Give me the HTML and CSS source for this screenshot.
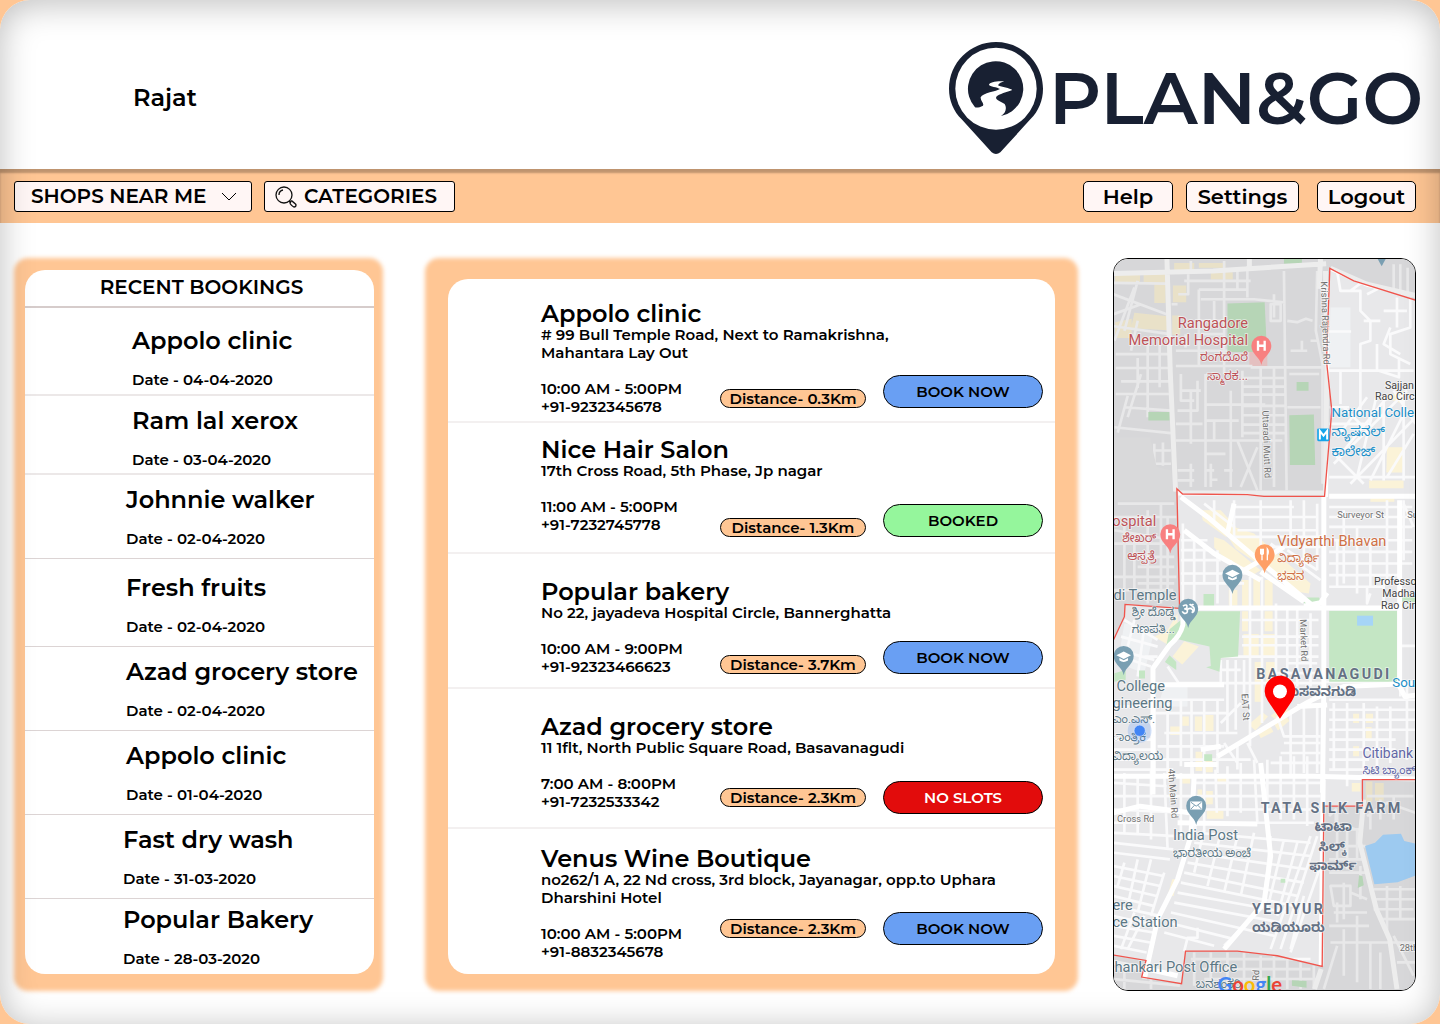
FILE: index.html
```html
<!DOCTYPE html>
<html lang="en">
<head>
<meta charset="utf-8">
<meta name="viewport" content="width=device-width, initial-scale=1">
<title>Plan&amp;Go</title>
<link rel="stylesheet" href="styles.css">
</head>
<body>
<div class="shell">
  <header class="header">
    <p class="user">Rajat</p>
    <a class="brand" href="#">
      <svg class="brand-mark" viewBox="57 66 282 336" aria-hidden="true">
        <path fill="#182032" fill-rule="evenodd" d="M198 66C120 66 57 129 57 206c0 36 14 68 38 92l90 99q13 10 26 0l90-99c24-24 38-56 38-92C339 129 276 66 198 66zM198 83a122 123 0 1 1 0 246a122 123 0 1 1 0-246z"/>
        <path fill="#182032" d="M135 262A83 83 0 1 1 213 288C228 280 231 262 224 252C214 244 194 240 199 230C206 222 232 216 247 210C240 204 215 202 204 196C206 190 215 186 223 184C200 182 178 187 177 194C179 200 202 201 210 207C200 214 158 218 152 232C151 244 163 249 159 257C150 262 140 264 135 262z"/>
      </svg>
      <span class="brand-name">PLAN&amp;GO</span>
    </a>
  </header>

  <nav class="bar">
    <div class="drop">
      <select class="box drop-select" aria-label="Shops near me"><option>SHOPS NEAR ME</option></select>
      <svg class="drop-arrow" viewBox="0 0 16 9" aria-hidden="true"><path d="M1 1l7 7 7-7"/></svg>
    </div>
    <button class="box categories" type="button">
      <svg class="lens" viewBox="0 0 22 22" aria-hidden="true">
        <circle cx="9" cy="9" r="8"/><path d="M4 9a5 5 0 0 1 4-5M14 15l2 2M16 15l-1 2c0 1 3 4 4 4s2-1 2-2-3-3-4-4z"/>
      </svg>
      CATEGORIES
    </button>
    <div class="account">
      <button class="box account-btn help" type="button">Help</button>
      <button class="box account-btn settings" type="button">Settings</button>
      <button class="box account-btn logout" type="button">Logout</button>
    </div>
  </nav>

  <main class="main">
    <section class="panel recent">
      <div class="sheet">
        <h2 class="recent-title">RECENT BOOKINGS</h2>
        <ul class="list">
          <li class="booking booking--top booking--inset"><h3 class="name">Appolo clinic</h3><p class="small">Date - 04-04-2020</p></li>
          <li class="booking booking--short booking--inset"><h3 class="name">Ram lal xerox</h3><p class="small">Date - 03-04-2020</p></li>
          <li class="booking"><h3 class="name">Johnnie walker</h3><p class="small">Date - 02-04-2020</p></li>
          <li class="booking booking--mid"><h3 class="name">Fresh fruits</h3><p class="small">Date - 02-04-2020</p></li>
          <li class="booking"><h3 class="name">Azad grocery store</h3><p class="small">Date - 02-04-2020</p></li>
          <li class="booking"><h3 class="name">Appolo clinic</h3><p class="small">Date - 01-04-2020</p></li>
          <li class="booking booking--outset"><h3 class="name">Fast dry wash</h3><p class="small">Date - 31-03-2020</p></li>
          <li class="booking booking--outset booking--last"><h3 class="name">Popular Bakery</h3><p class="small">Date - 28-03-2020</p></li>
        </ul>
      </div>
    </section>

    <section class="panel shops">
      <div class="sheet">
        <ul class="list shop-list">
          <li class="shop">
            <div class="info"><h3 class="name">Appolo clinic</h3><p class="small"># 99 Bull Temple Road, Next to Ramakrishna,<br>Mahantara Lay Out</p><p class="small hours">10:00 AM - 5:00PM<br>+91-9232345678</p></div>
            <div class="actions"><span class="distance">Distance- 0.3Km</span><button class="book" type="button">BOOK NOW</button></div>
          </li>
          <li class="shop shop--tight">
            <div class="info"><h3 class="name">Nice Hair Salon</h3><p class="small">17th Cross Road, 5th Phase, Jp nagar</p><p class="small hours">11:00 AM - 5:00PM<br>+91-7232745778</p></div>
            <div class="actions"><span class="distance">Distance- 1.3Km</span><button class="book book--done" type="button">BOOKED</button></div>
          </li>
          <li class="shop shop--roomy">
            <div class="info"><h3 class="name">Popular bakery</h3><p class="small">No 22, jayadeva Hospital Circle, Bannerghatta</p><p class="small hours">10:00 AM - 9:00PM<br>+91-92323466623</p></div>
            <div class="actions"><span class="distance">Distance- 3.7Km</span><button class="book" type="button">BOOK NOW</button></div>
          </li>
          <li class="shop shop--roomy">
            <div class="info"><h3 class="name">Azad grocery store</h3><p class="small">11 1flt, North Public Square Road, Basavanagudi</p><p class="small hours">7:00 AM - 8:00PM<br>+91-7232533342</p></div>
            <div class="actions actions--middle"><span class="distance">Distance- 2.3Km</span><button class="book book--full" type="button" disabled>NO SLOTS</button></div>
          </li>
          <li class="shop shop--last">
            <div class="info"><h3 class="name">Venus Wine Boutique</h3><p class="small">no262/1 A, 22 Nd cross, 3rd block, Jayanagar, opp.to Uphara<br>Dharshini Hotel</p><p class="small hours">10:00 AM - 5:00PM<br>+91-8832345678</p></div>
            <div class="actions actions--middle"><span class="distance">Distance- 2.3Km</span><button class="book" type="button">BOOK NOW</button></div>
          </li>
        </ul>
      </div>
    </section>

    <section class="map" aria-label="Map of Basavanagudi">
      <svg class="map-art" viewBox="27 24 909 2199" preserveAspectRatio="xMidYMid slice">
        <defs>
          <path id="pin" d="M0 58C-5 32-30 26-30 0a30 30 0 0 1 60 0C30 26 5 32 0 58z"/>
          <g id="cap" fill="#fff"><path d="M-22-4L0-15 22-4 0 7z"/><path d="M-13 4v8q13 9 26 0V4L0 11z"/></g>
        </defs>
        <rect x="27" y="24" width="909" height="2199" fill="#e8e8ea"/>

        <!-- commercial blocks -->
        <g fill="#fbf3d8">
          <path d="M32 66h75v32H32zM118 66h65v28h-65zM210 36h60v26h-60zM284 36h80v14h-80zM150 94h34v62h-34zM206 104h40v50h-40zM90 186l100 10v42l-110-6zM32 214l50-10v58H32zM204 194h24v58h-24zM320 64h66v22h-66z"/>
          <path d="M850 590h54l-8 76h-48zM796 690h104v24H796zM800 742h72v12h-72zM840 440l60-20v40z"/>
          <path d="M290 780l60 0 46 50-30 30-70-50zM390 830l60 20 170 150-5 30-30-4-190-130-26-40zM330 860l30 10 110 90-20 12-60-20-60-60z"/>
          <path d="M414 990h20v90h-20zM448 980h20v100h-20zM482 990h24v90h-24zM414 1084h18v60h-18zM482 1084h24v60h-24zM418 1152h46v66h-46zM476 1152h38v66h-38zM374 1020h26v46h-26z"/>
          <path d="M205 1220l35-46 44 16-50 54zM150 1160l40-20 30-50v50l-20 50zM434 1424l42-36 16 12-38 42zM462 1448l36-22 10 20-38 20zM500 1398l40-30 20 20-40 24zM508 1420l40-20 8 14-34 28zM452 1236h24v120h-24zM486 1236h28v90h-28z"/>
          <path d="M272 1400h22v44h-22zM302 1396h26v48h-26zM234 1400h20v28h-20zM198 1430h30v26h-30zM748 1392h18v28h-18zM786 1392h22v28h-22zM786 1432h18v40h-18zM748 1490h18v30h-18zM274 1506h20v58h-20zM304 1530h22v38h-22zM280 1620h14v60h-14zM306 1624h20v40h-20zM340 1584h32v18h-32zM308 1684h50v24h-50zM234 1584h24v18h-24zM744 1600h26v26h-26zM786 1596h20v60h-20zM814 1600h26v54h-26zM204 1890h14l-10 50h-18z"/>
        </g>
        <path fill="#eff1f3" d="M680 170h60v180h-66zM60 1120l90 20-30 130-80-30zM180 1310h70v60h-90z"/>
        <path fill="#f6cfcf" d="M436 300h54v46h-54z"/>

        <!-- streets -->
        <g fill="none" stroke-linejoin="round">
          <path class="lane" d="M27 96L186 98M240 90l200 0M27 130l160 60M110 160L27 190M60 240l40-150M30 270l60-160M27 226l170 24M80 300l20-90M34 310h160M34 352h170M50 392h150M34 430h160M60 470l140 10M30 530l170 18M40 546l30-110M70 500l40-130M130 280v220M166 270v140M100 322v90M150 580v60M176 576v70M150 600h50M145 640h55"/>
          <path class="lane" d="M220 160h-18M260 30v30M252 70v60h-30M284 116h146l0-70M360 30v120M430 60v80M400 48v66M284 116v230M360 150v220M330 150v60M244 250v40M290 145h160l94 10M215 300h220M215 346h230M510 130v70M540 60l8 660M500 160v50h30v-50zM550 210l30 4 26-10 20 6M560 300h50M594 300v-30M440 350h220M290 210h70M290 250h70"/>
          <path class="lane" d="M230 370v80h40M215 520h80M230 420l60 0M220 480h60v-90M260 420v160M304 370v340M380 420v290M304 462h180M304 510h100M330 510v60M215 570h320M304 610h60M320 640v70M330 660h-26M320 688h20M220 660h50M220 690h50M260 640v70M400 570l60 150M460 590l-50 120M360 660h26M415 360v200M470 350v370M510 350v360M415 382h130M415 408h130M415 432h130M415 466h130M415 494h130M415 522h130M415 548h130M550 470h100M556 370h90M640 60l-4 180 20 100v360M620 270h20"/>
          <path class="lane" d="M700 60l10 60h60v60l30 30v60l-30 10v80h160M790 130l40-20 90 30v90l-60 20v60l60 30M840 180h70M780 210h50M860 230l-20 50 50 30M676 242h66M676 360h250M710 360v100M770 360v130M870 40v80M890 40v80M912 50v80M740 120l40-30M826 360l60 20 0-60M880 140v90M820 280v80"/>
          <path class="lane" d="M690 640l220-220M676 680h260M740 700l196-200M700 560l90-120M720 600l130-160M800 690l100-200M676 520h120M690 610l90 90M900 440v250M840 450v240M870 420l66 100M720 470l60 60M676 470l60 0M760 680l60-250M850 680l80-130"/>
          <path class="lane" d="M40 760h170M27 800h190M60 830v220M90 850v200M130 780v280M170 760v300M30 880h180M100 920h110M100 950h110M27 980h190M100 1000h110M190 800v250M27 1020h180M30 840l180 30"/>
          <path class="lane" d="M236 820v230M270 860v200M230 870h80M230 900h90M230 930h120M230 970h200M230 1000h190M300 880v120M340 900v160M380 930v150M330 750v60M390 750v110M470 750v180M390 770h180M390 800h250M400 840h240M390 860h260M470 890h180M560 750v130M600 750v200M640 760v200M300 760l90 70M500 880l150 110M550 900l90 60"/>
          <path class="lane" d="M676 770h250M676 800h250M676 830h250M676 870h250M676 905h250M676 940h250M676 975h210M676 1010h160M720 780v220M760 830v200M800 870v140M850 750v250M900 750v180M700 870v140M790 1010v50l10-30M840 990v80M890 960v120"/>
          <path class="lane" d="M438 980v510M474 980v440M414 1110h230M414 1160h230M414 1186h230M414 1220h230M516 1060v260M550 1070v220M580 1080v230M620 1090v220M550 1240h90M350 1220h230M350 1230v80M370 1230v220M395 1230v210M420 1230v110M350 1260h60M350 1420l60-60M516 1270h130M280 1300h140M190 1250l40 60M220 1300h440M60 1110l100 60M50 1160l110 30M40 1200l110 30M90 1110l-30 120M120 1130l-20 150M120 1220h40M80 1230l60 20M890 1188h46M890 1090v250"/>
          <path class="lane" d="M130 1350h230M150 1390h220M27 1370h110M150 1350v230M190 1360v220M230 1350v200M262 1350v230M300 1350v230M340 1350v220M180 1450h220M160 1490h200M160 1530h280M27 1530h140M27 1500h120M27 1470h120M520 1400l20 60h110M560 1390v190M540 1480h110M530 1510h120M500 1540h150M600 1370v200M640 1370v200M430 1480l30 60M400 1490v70M360 1480l40 60"/>
          <path class="lane" d="M676 1350h260M676 1380h260M676 1410h260M676 1440h260M676 1470h200M676 1500h200M676 1530h120M676 1560h120M730 1360v250M780 1360v220M820 1370v200M860 1370v170M910 1300v230M690 1360v200"/>
          <path class="lane" d="M27 1600l160 10M27 1640h240M27 1680l230 10M27 1720h80M27 1750l190 10M27 1780l180 20M27 1810l170 20M60 1570v180M100 1580v170M140 1560v210M180 1570l10 230M230 1570v190M264 1540l10 200M300 1560v190M334 1560l4 130M370 1550v150M410 1540v150M450 1530l10 190M490 1530v140M530 1520v190M570 1520v190M610 1520v210"/>
          <path class="lane" d="M270 1600h380M270 1640h380M280 1680h370M290 1720h340M280 1750l340 30M270 1780l350 40M260 1810l350 50M250 1840l350 60M240 1870l340 70M230 1900l340 70M220 1930l330 60M210 1960l320 60M200 1990l310 70M190 2020l200 50M180 2050l150 40M300 1740l-30 130M350 1750l-40 160M400 1760l-40 170M450 1750l-40 190M500 1760l-20 200M540 1770l-50 210M580 1780l-60 220M620 1760l-120 340M640 1760l-110 340M650 1850l-90 260M600 1940l-40 160M490 1960l-130 130"/>
          <path class="lane" d="M27 1850l150 30M27 1880l140 30M27 1910l130 30M27 1940l120 30M27 1970l140 30M27 2000l130 30M27 2030l120 20M27 2060l110 20M27 2090l100 20M60 1840l-20 70M100 1830l-30 140M140 1830l-40 160M120 2000l-50 100M90 1990l-40 110M180 1870l-40 130"/>
          <path class="lane" d="M676 1700l20-20v40l60 20M680 1740h90M676 1790h110M676 1830h110M700 1690v160M730 1720v140M760 1740v90M676 1870l110 0M680 1910l60 0v60h-50zM740 1930l50 20M690 1990h100M700 1960v60M720 1900v110M770 1850v100M676 2030h120M680 2080h256M720 2040v140M760 2000v200M790 1700l60-40 86 30M800 1680v60M830 1650v60M870 1640v70M790 1640h140M810 1920h126M810 1950h126M810 1980h120M830 2010h106M850 1910v140M890 1910v100M870 2060l60 120M900 2100h36M880 2140h56M800 2080v140M830 2110v110M700 2090l-40 130"/>
          <path class="lane" d="M260 2130h360M290 2160h330M300 2190h340M270 2110v100M320 2110v110M370 2110v110M420 2110v110M470 2120v100M510 2120v100M550 2130v90M590 2140v80M630 2150v70M27 2160h70M27 2190l200 20M60 2140v80M140 2190v30"/>
          <path class="lane" d="M660 1296h220M240 2106l10-40 30 0v-30M27 1560h180M900 760l30 70"/>
        </g>

        <!-- parks -->
        <g fill="#c4e6c4">
          <path d="M370 158l112-4 6 130-24 20h-94zM540 24h54v14h-54zM132 484h64v26h-64zM556 494l74-2 4 152h-76zM578 394h36v26h-36z"/>
          <path d="M298 1032h32v38h-32zM600 1042h46l6 22h-52zM676 1082h204v214H676zM262 1084h146l-6 136-52 4-4 42-40-14 14-4-4-58-70-16-40-10-22 34 12-60zM182 1236l14-20 20 20v24zM30 1270l34-10v30l-34 6z"/>
          <path d="M300 1514h24v20h-24zM766 1878l10 2 4 28-18 8zM564 2194l44 2v20l-44-6zM530 1888h14v12h-14zM890 1040h46v16h-46zM104 1262h18v24h-18z"/>
        </g>
        <!-- water -->
        <path fill="#a6d5f7" d="M760 1097h48v30h-48z"/>

        <g fill="none" stroke-linejoin="round">
          <path class="avenue" d="M188 24l10 340 16 360M27 68l300-8 340-22M650 24l-4 90M436 24v28M680 52l110 48 146 34M222 728h440M676 738h260M665 60l4 280-4 400M660 740v560l-4 330M230 740l80 60 320 270M240 840l90 70 140 80M470 965l130 90M390 760l-20 90M420 960l120-70M600 1068l50-10 20-30M230 1074h650M888 750v560l16 30 32-4M236 1075v50q-8 34-40 60l-50 70v380"/>
          <path class="avenue" d="M340 1520l100-60 150-90q40-26 130-60l216-10M140 1305h220M580 1370l90-4M27 1580h600l309 8M270 1580l-10 180-40 130-60 120-40 180M658 1590l-6 560M780 1650l-12 130 50 200 40 90 22 150M27 1690l80-20 150 20M220 1720l240 4M470 1540l30 280-20 140-120 140M130 2160l90 20M27 2140l100 20M652 2160l-20 60M290 1500l60-10M240 1545h100"/>
        </g>

        <!-- shade outside the ward -->
        <g fill="#000" fill-opacity=".07">
          <path d="M27 24H936V148L750 90 678 52 668 330 684 480 662 738 480 738 430 733 235 731 218 715 226 1075 62 1063 60 1100 27 1170z"/>
          <path d="M936 1590H776V1670H660L655 2152 520 2120 400 2106 244 2106 232 2204 112 2184 125 2134 27 2118V2223H936z"/>
        </g>
        <path fill="#d9d9da" d="M27 560h110l20 90 44 10 4 60 12 20v10H27z"/>
        <path fill="#9dcaf0" d="M784 1790l30-10 24-24 54-3 10 22 34 8v96l-54 20-70 6z"/>
        <g fill="none" stroke="#f0544c" stroke-width="4">
          <path d="M936 148L750 90 678 52 668 330 684 480 662 738 480 738 430 733 235 731 218 715 226 1075 62 1063 60 1100 27 1170"/>
          <path d="M936 1590H776V1670H660L655 2152 520 2120 400 2106 244 2106 232 2204 112 2184 125 2134 27 2118"/>
        </g>

        <!-- pins -->
        <use href="#pin" x="472" y="285" fill="#f88080"/>
        <use href="#pin" x="198" y="852" fill="#f88080"/>
        <use href="#pin" x="482" y="912" fill="#fe9f67"/>
        <use href="#pin" x="385" y="974" fill="#7a9fb2"/>
        <use href="#pin" x="252" y="1076" fill="#7a9fb2"/>
        <use href="#pin" x="58" y="1218" fill="#7a9fb2"/>
        <use href="#pin" x="276" y="1669" fill="#7a9fb2"/>
        <path d="M822 24h24l-12 22z" fill="#7a9fb2"/>
        <use href="#cap" x="385" y="974"/>
        <use href="#cap" x="58" y="1220"/>
        <path fill="none" stroke="#fff" stroke-width="7" d="M462 270v30M482 270v30M462 285h20M188 837v30M208 837v30M188 852h20"/>
        <path fill="none" stroke="#fff" stroke-width="4" d="M470 896v14q4 6 8 0v-14M474 896v34M490 930v-34q6 8 0 20"/>
        <path fill="none" stroke="#fff" stroke-width="5" d="M236 1068q14-8 12 4q0 4-8 4q14 2 8 12q-8 6-14-4M250 1078q8-6 14 0t0 10M262 1070q8-2 8 8t-8 8M256 1062q6 6 12 0"/>
        <path fill="#fff" d="M258 1656h36v24h-36z"/><path fill="none" stroke="#7a9fb2" stroke-width="3" d="M260 1658l16 12 16-12M260 1679l11-12M292 1679l-11-12"/>
        <rect x="640" y="534" width="37" height="38" rx="4" fill="#16a5ea"/>
        <path d="M648 567v-26l11 14 11-14v26" fill="none" stroke="#fff" stroke-width="6"/>

        <!-- labels -->
        <g class="label" font-size="44" text-anchor="end" fill="#bd5257"><text x="432" y="233">Rangadore</text><text x="432" y="283">Memorial Hospital</text><text x="156" y="826">ospital</text></g>
        <g class="label" font-size="36" text-anchor="end" fill="#bd5257"><text x="432" y="332">ರಂಗದೊರೆ</text><text x="432" y="388">ಸ್ಮಾರಕ...</text><text x="156" y="874">ಶೇಖರ್</text><text x="156" y="930">ಆಸ್ಪತ್ರೆ</text></g>
        <g class="label" font-size="32" fill="#444"><text x="844" y="414">Sajjan</text><text x="814" y="449">Rao Circ</text><text x="811" y="1005">Professo</text><text x="836" y="1041">Madha</text><text x="832" y="1076">Rao Cir</text></g>
        <g class="label" font-size="40" fill="#1b8fc8"><text x="683" y="500">National Colle</text><text x="866" y="1313">Sou</text></g>
        <g class="label" font-size="40" fill="#1b8fc8"><text x="683" y="556">ನ್ಯಾಷನಲ್</text><text x="683" y="618">ಕಾಲೇಜ್</text></g>
        <g class="label" font-size="28" fill="#707070"><text transform="translate(651 92) rotate(88)">Krishna Rajendra Rd</text><text transform="translate(475 480) rotate(88)">Uttaradi Mutt Rd</text><text transform="translate(588 1108) rotate(88)">Market Rd</text><text transform="translate(412 1332) rotate(86)">EAT St</text><text transform="translate(192 1558) rotate(86)">4th Main Rd</text><text transform="translate(464 2196) rotate(-86)">Rd</text><text x="700" y="804">Surveyor St</text><text x="911" y="802">Su</text><text x="38" y="1718">Cross Rd</text><text x="888" y="2106">28th</text></g>
        <g class="label" font-size="44" fill="#cf7045"><text x="520" y="886">Vidyarthi Bhavan</text><text x="520" y="935" font-size="35">ವಿದ್ಯಾರ್ಥಿ</text><text x="520" y="990" font-size="35">ಭವನ</text></g>
        <g class="label" font-size="44" fill="#5c7885"><text x="27" y="1050">di Temple</text><text x="36" y="1323">College</text><text x="24" y="1375">gineering</text><text x="206" y="1773">India Post</text><text x="24" y="1982">ere</text><text x="24" y="2032">ce Station</text><text x="30" y="2168">hankari Post Office</text></g>
        <g class="label" font-size="35" fill="#5c7885"><text x="82" y="1098">ಶ್ರೀ ದೊಡ್ಡ</text><text x="82" y="1150">ಗಣಪತಿ...</text><text x="24" y="1420">ಎಂ.ಎಸ್.</text><text x="24" y="1474">ಾಂತ್ರಿಕ</text><text x="24" y="1530">ವಿದ್ಯಾಲಯ</text><text x="206" y="1822">ಭಾರತೀಯ ಅಂಚೆ</text><text x="275" y="2218">ಬನಶಂಕರಿ</text></g>
        <g class="label" font-size="42" fill="#6267a6"><text x="776" y="1524">Citibank</text><text x="776" y="1574" font-size="34">ಸಿಟಿ ಬ್ಯಾಂಕ್</text></g>
        <g class="label area" font-size="43" fill="#647184"><text x="457" y="1287">BASAVANAGUDI</text><text x="470" y="1690">TATA SILK FARM</text><text x="444" y="1994">YEDIYUR</text></g>
        <g class="label area-local" font-size="40" fill="#647184"><text x="550" y="1338">ಬಸವನಗುಡಿ</text><text x="632" y="1744">ಟಾಟಾ</text><text x="644" y="1804">ಸಿಲ್ಕ್</text><text x="616" y="1862">ಫಾರ್ಮ್</text><text x="444" y="2048">ಯಡಿಯೂರು</text></g>
        <text class="google" x="340" y="2228" font-size="61"><tspan fill="#4285f4">G</tspan><tspan fill="#ea4335">o</tspan><tspan fill="#fbbc05">o</tspan><tspan fill="#4285f4">g</tspan><tspan fill="#34a853">l</tspan><tspan fill="#ea4335">e</tspan></text>

        <!-- current position and destination -->
        <circle cx="106" cy="1443" r="36" fill="#4285f4" fill-opacity=".2"/><circle cx="106" cy="1443" r="17" fill="#4285f4" stroke="#dbe7fd" stroke-width="2"/>
        <path fill="#f00" d="M528 1407l-36-53q-10-14-10-30a46 46 0 0 1 92 0q0 16-10 30z"/>
        <circle cx="528" cy="1325" r="21" fill="#fff"/>
      </svg>
    </section>
  </main>
</div>
</body>
</html>
```
FILE: styles.css
```css
:root {
  --peach: #ffc694;
  --ink: #000;
  --paper: #fff6f5;
}

* { box-sizing: border-box; }

body {
  margin: 0;
  background: var(--peach);
  color: var(--ink);
  font-family: Montserrat, Inter, "Liberation Sans", sans-serif;
  font-weight: 600;
}

h2, h3, p, ul { margin: 0; padding: 0; font-weight: 600; }

button, select { font: inherit; color: inherit; }

.shell {
  position: relative;
  display: flex;
  flex-direction: column;
  min-height: 100vh;
  border-radius: 30px;
  background: #fff;
  overflow: hidden;
}

/* soft vignette over the whole page */
.shell::after {
  content: "";
  position: absolute;
  inset: 0;
  border-radius: inherit;
  box-shadow: inset 0 4px 34px rgba(0, 0, 0, .26);
  pointer-events: none;
}

.header {
  display: flex;
  align-items: center;
  justify-content: space-between;
  padding: 42px 17px 15px 133px;
}

.user { font-size: 24px; line-height: 26px; }

.brand {
  display: flex;
  align-items: center;
  gap: 6px;
  color: #182032;
  text-decoration: none;
}

.brand-mark { width: 94px; height: 112px; }

.brand-name { font-size: 72px; line-height: 80px; font-weight: 600; }

.bar {
  display: flex;
  gap: 12px;
  padding: 12px 24px 11px 14px;
  background: var(--peach);
  box-shadow: inset 0 4px 2px rgba(0, 0, 0, .25);
}

.box {
  height: 31px;
  padding: 0;
  border: 1px solid #000;
  border-radius: 3px;
  background: var(--paper);
  font-size: 20px;
  line-height: 29px;
}

.drop { position: relative; }

.drop-select { width: 238px; padding-left: 16px; appearance: none; }

.drop-arrow {
  position: absolute;
  top: 11px;
  right: 15px;
  width: 16px;
  height: 9px;
  fill: none;
  stroke: #000;
  pointer-events: none;
}

.categories {
  display: flex;
  align-items: center;
  gap: 7px;
  width: 191px;
  padding-left: 10px;
}

.lens { width: 22px; height: 22px; fill: none; stroke: #111; stroke-width: 1.3; }

.account { display: flex; margin-left: auto; }
.account-btn { border-radius: 5px; font-size: 21px; }
.help { width: 90px; }
.settings { width: 113px; margin-left: 13px; }
.logout { width: 99px; margin-left: 18px; }

.main {
  flex: 1;
  display: grid;
  grid-template-columns: 369fr 695fr 338fr;
  padding: 35px 24px 33px 14px;
}

.panel { position: relative; display: flex; }

.panel::before {
  content: "";
  position: absolute;
  inset: 0;
  border-radius: 14px;
  background: var(--peach);
  filter: blur(2px);
}

.recent { padding: 12px 9px 17px 11px; }
.shops { margin-left: 42px; padding: 21px 23px 17px; }

.sheet {
  position: relative;
  flex: 1;
  display: flex;
  flex-direction: column;
  border-radius: 20px;
  background: #fff;
}

.list { list-style: none; }

.recent-title {
  padding: 4px 0 6px 4px;
  border-bottom: 2px solid #d6cccb;
  font-size: 20px;
  line-height: 26px;
  text-align: center;
}

.name { font-size: 24px; line-height: 24px; }
.small { font-size: 15px; line-height: 18px; }

.booking { padding: 13px 0 10px 101px; border-bottom: 1px solid #dcd4d4; }
.booking .small { margin-top: 18px; }
.booking--inset { padding-left: 107px; border-bottom: 2px solid #ece8e8; }
.booking--outset { padding-left: 98px; }
.booking--top { padding-top: 21px; padding-bottom: 5px; }
.booking--short { padding-bottom: 4px; }
.booking--mid { padding-top: 17px; }
.booking--last { padding-top: 9px; padding-bottom: 4px; border-bottom: 0; }

.shop-list {
  flex: 1;
  display: grid;
  grid-template-rows: 144fr 131fr 135fr 140fr 145fr;
}

/* details and actions share one cell so long addresses can run above the buttons */
.shop {
  display: grid;
  padding: 23px 12px 0 93px;
  border-bottom: 2px solid #f3f0f0;
}

.shop--tight { padding-top: 15px; }
.shop--roomy { padding-top: 26px; }
.shop--last { padding-top: 18px; border-bottom: 0; }

.info, .actions { grid-area: 1 / 1; }

.hours { margin-top: 18px; }

.actions {
  display: flex;
  align-items: flex-end;
  align-self: end;
  justify-self: end;
  gap: 17px;
  padding-bottom: 13px;
}

.actions--middle { align-items: center; }
.shop--tight .actions { padding-bottom: 15px; }
.shop--last .actions { padding-bottom: 29px; }

.distance {
  width: 146px;
  border: 1px solid #000;
  border-radius: 10px;
  background: var(--peach);
  font-size: 15px;
  line-height: 17px;
  text-align: center;
}

.book {
  width: 160px;
  height: 33px;
  border: 1px solid #000;
  border-radius: 17px;
  background: #699ff3;
  font-size: 15px;
}

.book--done { background: #95f69c; }
.book--full { background: #e20c0c; color: #fff; }

.map {
  position: relative;
  margin-left: 35px;
  border: 1px solid #000;
  border-radius: 15px;
  overflow: hidden;
}

.map-art { position: absolute; width: 100%; height: 100%; }

.lane { stroke: #fafafb; stroke-width: 8; }
.avenue { stroke: #fff; stroke-width: 15; }

.label {
  font-family: Roboto, "Noto Sans Kannada", "Noto Sans", sans-serif;
  font-weight: 400;
  paint-order: stroke;
  stroke: #fff;
  stroke-opacity: .6;
  stroke-width: 5;
}

.area { font-weight: 700; letter-spacing: 7px; }
.area-local { font-weight: 700; }
.google { font-family: Lato, sans-serif; font-weight: 700; }
```
